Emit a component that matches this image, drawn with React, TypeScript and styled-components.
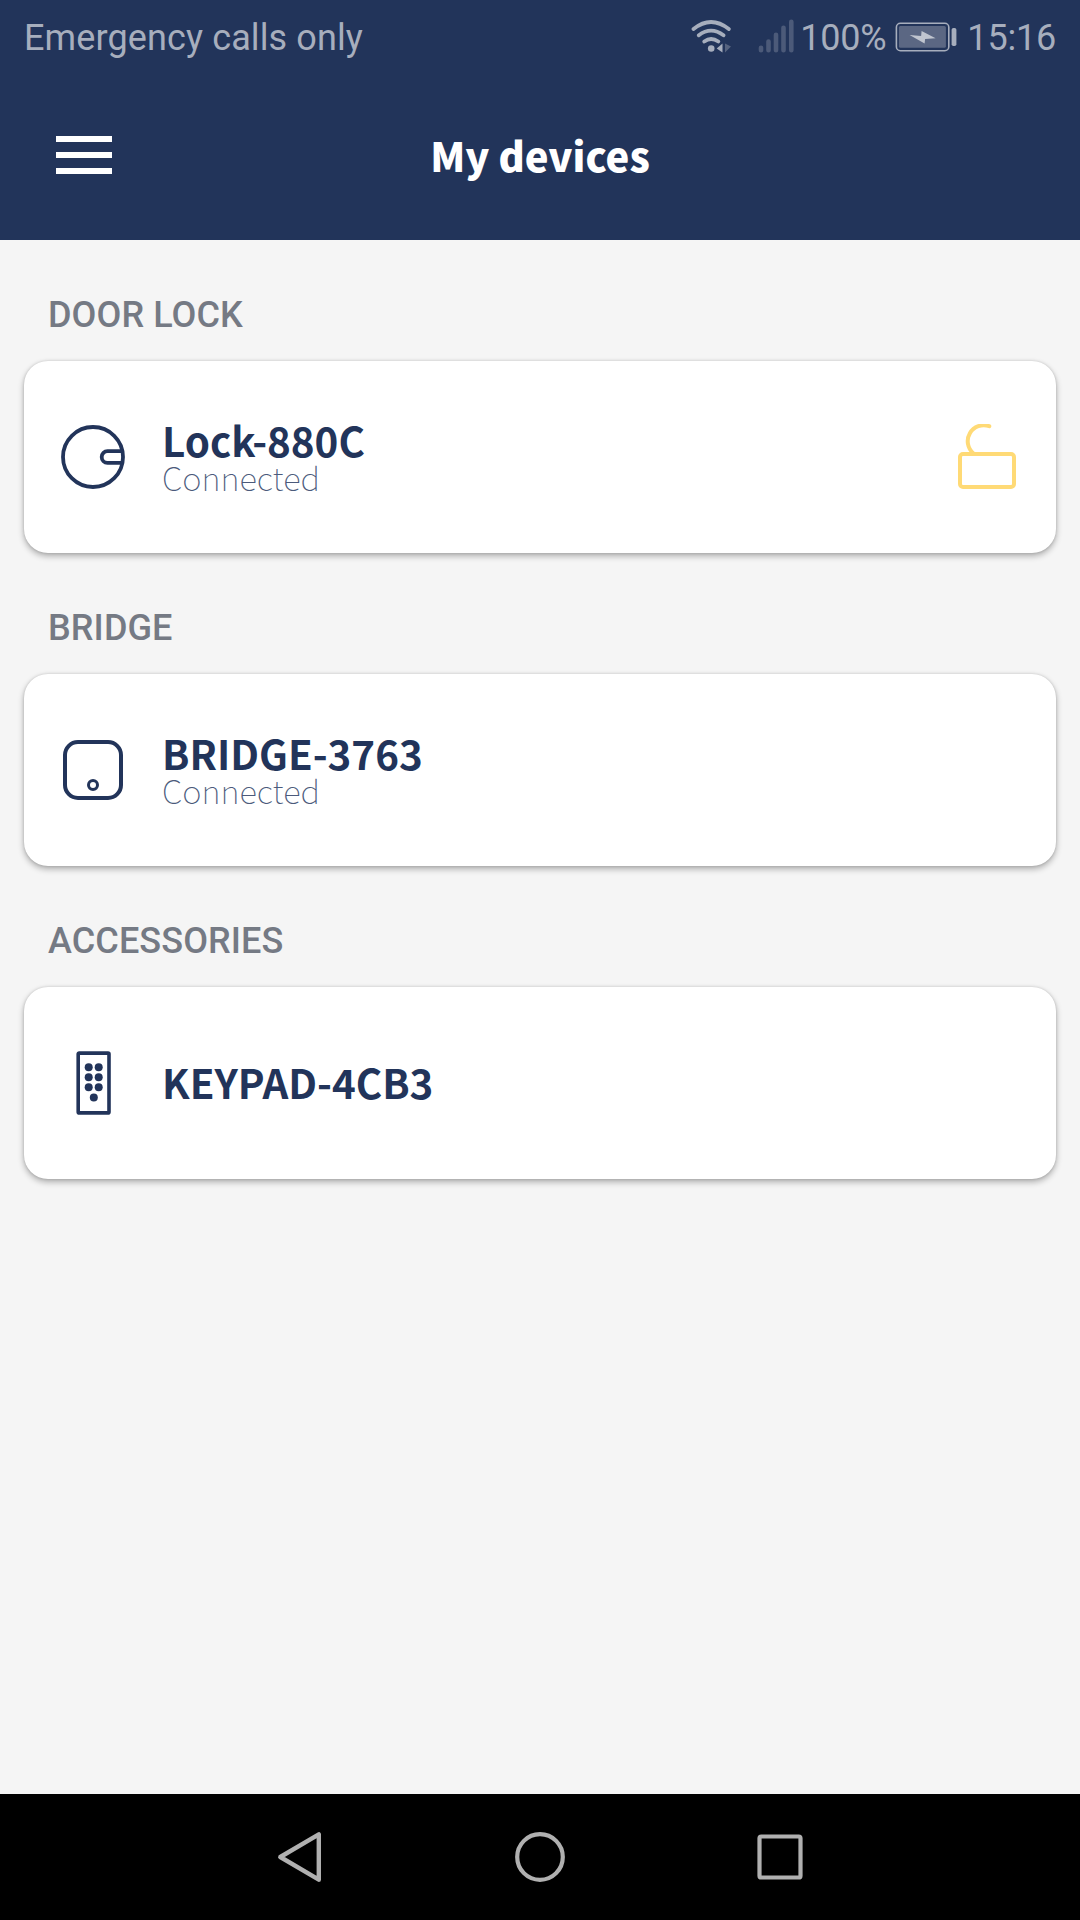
import React from "react";
import styled, { createGlobalStyle } from "styled-components";

const navy = "#22345a";
const dim = "#a7aebd";
const roboto = `Roboto, "Liberation Sans", sans-serif`;
const source = `"Noto Sans CJK JP", "Noto Sans", sans-serif`;

const Global = createGlobalStyle`
  *, *::before, *::after { box-sizing: border-box; }
  body { margin: 0; background: #f5f5f5; }
`;

const Screen = styled.div`
  display: flex;
  flex-direction: column;
  width: 1080px;
  height: 1920px;
  overflow: hidden;
  background: #f5f5f5;
  font-family: ${roboto};
`;

const StatusBar = styled.div`
  display: flex;
  align-items: center;
  justify-content: space-between;
  height: 75px;
  padding: 0 24px;
  background: ${navy};
  color: ${dim};
  font-size: 36px;
  line-height: 42px;
  white-space: nowrap;
`;

const StatusGroup = styled.div`
  display: flex;
  align-items: center;
`;

const StatusText = styled.span<{ $width?: number; $spacing?: number }>`
  width: ${(p) => (p.$width ? `${p.$width}px` : "auto")};
  letter-spacing: ${(p) => p.$spacing ?? 0}px;
`;

const StatusIcon = styled.svg<{ $gap: number }>`
  display: block;
  margin-right: ${(p) => p.$gap}px;
`;

const Toolbar = styled.header`
  display: grid;
  grid-template-columns: 168px 1fr 168px;
  align-items: center;
  height: 165px;
  padding-bottom: 5px;
  background: ${navy};
`;

const MenuButton = styled.button`
  display: flex;
  flex-direction: column;
  gap: 10px;
  width: 56px;
  margin: 0 0 1px 56px;
  padding: 0;
  border: 0;
  background: none;
`;

const MenuLine = styled.span`
  height: 6px;
  background: #fff;
`;

const Title = styled.h1`
  margin: 0;
  color: #fff;
  font: 900 40px/44px ${source};
  text-align: center;
`;

const Content = styled.main`
  display: flex;
  flex: 1;
  flex-direction: column;
  padding: 0 24px;
`;

const Section = styled.section`
  display: flex;
  flex-direction: column;
  height: 313px;
`;

const SectionTitle = styled.h2`
  height: 121px;
  margin: 0;
  padding: 54px 24px 0;
  color: #757a84;
  font: 500 36px/42px ${roboto};
  letter-spacing: 0.1px;
`;

const Card = styled.article`
  display: flex;
  align-items: center;
  height: 192px;
  padding: 0 36px;
  border-radius: 24px;
  background: #fff;
  box-shadow: 0 3px 6px rgba(0, 0, 0, 0.3), 0 0 3px rgba(0, 0, 0, 0.14);
`;

const DeviceIcon = styled.svg`
  display: block;
  flex: none;
  margin-right: 36px;
`;

const Details = styled.div<{ $single: boolean }>`
  display: flex;
  flex: 1;
  flex-direction: column;
  padding-bottom: ${(p) => (p.$single ? 2 : 3)}px;
`;

const Name = styled.div`
  color: ${navy};
  font: 700 40.3px/42px ${source};
`;

const State = styled.div`
  color: #4b5a7b;
  font: 100 32.8px/32px ${source};
`;

const NavBar = styled.nav`
  display: flex;
  align-items: center;
  justify-content: center;
  gap: 180px;
  height: 126px;
  background: #000;
`;

const NavIcon = styled.svg`
  display: block;
`;

const LockIcon = () => (
  <DeviceIcon width="66" height="66" viewBox="0 0 66 66" fill="none" stroke={navy} strokeWidth="3.8">
    <circle cx="33" cy="33" r="30" />
    <path d="M62 27.2H47.5a5.8 5.8 0 0 0 0 11.6H62" />
  </DeviceIcon>
);

const BridgeIcon = () => (
  <DeviceIcon width="66" height="66" viewBox="0 0 66 66" fill="none" stroke={navy}>
    <rect x="5" y="5" width="56" height="56" rx="13" strokeWidth="4" />
    <circle cx="33" cy="48" r="4.5" strokeWidth="3" />
  </DeviceIcon>
);

const keys = [[28.7, 17.3], [38.7, 17.3], [28.7, 27.3], [38.7, 27.3], [28.7, 37.3], [38.7, 37.3], [33.8, 47.5]];

const KeypadIcon = () => (
  <DeviceIcon width="66" height="66" viewBox="0 0 66 66" fill={navy}>
    <rect x="18.2" y="3.1" width="30.8" height="59.8" rx="1" fill="none" stroke={navy} strokeWidth="3.6" />
    {keys.map(([x, y]) => (
      <circle key={`${x}-${y}`} cx={x} cy={y} r="4" />
    ))}
  </DeviceIcon>
);

const UnlockedIcon = () => (
  <svg width="66" height="66" viewBox="954 424 66 66" fill="none" stroke="#ffda76" strokeWidth="4" strokeLinecap="round">
    <rect x="960" y="454" width="54" height="33" rx="3" />
    <path d="M989.3 426.2A16 16 0 0 0 973.5 453.5" />
  </svg>
);

const devices = [
  { section: "DOOR LOCK", name: "Lock-880C", state: "Connected", icon: <LockIcon />, action: <UnlockedIcon /> },
  { section: "BRIDGE", name: "BRIDGE-3763", state: "Connected", icon: <BridgeIcon /> },
  { section: "ACCESSORIES", name: "KEYPAD-4CB3", icon: <KeypadIcon /> },
];

export default function App() {
  return (
    <Screen>
      <Global />
      <StatusBar>
        <StatusText $spacing={0.12}>Emergency calls only</StatusText>
        <StatusGroup>
          <StatusIcon $gap={24} width="44" height="40" viewBox="690 17.5 44 40" fill="none" stroke={dim} strokeWidth="3.8" strokeLinecap="round">
            <path d="M693.5 28.5Q711 14.5 728.8 28.5M698.8 34.8Q711 25.5 723.5 34.8M704.3 41Q711 36 718.3 41" />
            <circle cx="711.2" cy="48" r="3.3" fill={dim} stroke="none" />
            <path d="M716.7 48l5.8-5v9z" fill={dim} stroke="none" />
            <path d="M725 43v9l6-6z" fill="#56637f" stroke="none" />
          </StatusIcon>
          <StatusIcon $gap={6} width="36" height="40" viewBox="758.5 17.5 36 40" stroke="#4c5a79" strokeWidth="4.6" strokeLinecap="round">
            <path d="M761.5 47.3v2.4M769 41v8.7M776.5 34.3v15.4M784 27.3v22.4M791.8 21.3v28.4" />
          </StatusIcon>
          <StatusText $width={95} $spacing={-0.3}>100%</StatusText>
          <StatusIcon $gap={9} width="63" height="40" viewBox="895.4 17.5 63 40">
            <rect x="896.8" y="22.8" width="52.4" height="27.4" rx="4" fill="none" stroke={dim} strokeWidth="1.6" />
            <rect x="899.3" y="25.5" width="47" height="21.7" rx="1.5" fill="#5b6783" />
            <rect x="952" y="27.5" width="4.8" height="18" rx="1.8" fill={dim} />
            <path d="M910 34.5l11.5 1 .5-5 14 7.3-10.5.7-.5 4.5z" fill="#c0c5cf" />
          </StatusIcon>
          <StatusText $spacing={-0.2}>15:16</StatusText>
        </StatusGroup>
      </StatusBar>
      <Toolbar>
        <MenuButton aria-label="Menu">
          <MenuLine />
          <MenuLine />
          <MenuLine />
        </MenuButton>
        <Title>My devices</Title>
      </Toolbar>
      <Content>
        {devices.map((d) => (
          <Section key={d.name}>
            <SectionTitle>{d.section}</SectionTitle>
            <Card>
              {d.icon}
              <Details $single={!d.state}>
                <Name>{d.name}</Name>
                {d.state && <State>{d.state}</State>}
              </Details>
              {d.action}
            </Card>
          </Section>
        ))}
      </Content>
      <NavBar>
        <NavIcon width="60" height="60" viewBox="270 1827 60 60" fill="none" stroke="#b0b0b0" strokeWidth="4.4" strokeLinejoin="round">
          <path d="M318.8 1834.3v45.4L280.3 1857z" />
        </NavIcon>
        <NavIcon width="60" height="60" viewBox="510 1827 60 60" fill="none" stroke="#b0b0b0" strokeWidth="4.2">
          <circle cx="540" cy="1857" r="22.8" />
        </NavIcon>
        <NavIcon width="60" height="60" viewBox="750 1827 60 60" fill="none" stroke="#b0b0b0" strokeWidth="4.2">
          <rect x="759.5" y="1836.5" width="41" height="41" rx="1.8" />
        </NavIcon>
      </NavBar>
    </Screen>
  );
}
